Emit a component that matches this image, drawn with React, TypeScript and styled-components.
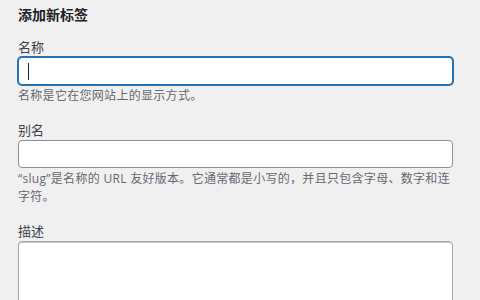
import React from "react";
import styled, { createGlobalStyle } from "styled-components";

const Global = createGlobalStyle`
  html, body {
    margin: 0;
    padding: 0;
    background: #f0f0f1;
    overflow: hidden;
  }
  body {
    font-family: "Open Sans", "Noto Sans CJK SC", sans-serif;
    color: #3c434a;
  }
`;

const Wrap = styled.div`
  width: 480px;
  height: 300px;
  box-sizing: border-box;
  padding: 5px 27px 0 18px;
  overflow: hidden;
`;

const Title = styled.h2`
  margin: 0 0 13px;
  font-size: 14px;
  line-height: 20px;
  font-weight: 700;
  color: #1d2327;
`;

const Field = styled.div`
  margin-bottom: 16px;
`;

const Label = styled.label`
  display: block;
  font-size: 13px;
  line-height: 18px;
  color: #3c434a;
  margin-bottom: 1px;
`;

const Input = styled.input<{ $focused?: boolean }>`
  display: block;
  box-sizing: border-box;
  width: 100%;
  height: 28px;
  margin: 0;
  padding: 0 8px;
  font-family: inherit;
  font-size: 14px;
  background: #fff;
  border: 1px solid ${(p) => (p.$focused ? "#2271b1" : "#8c8f94")};
  border-radius: 4px;
  box-shadow: ${(p) => (p.$focused ? "0 0 0 1px #2271b1" : "none")};
  outline: none;
  color: #2c3338;
`;

const Caret = styled.span`
  position: absolute;
  left: 10px;
  top: 6px;
  width: 1px;
  height: 17px;
  background: #1d2327;
`;

const InputBox = styled.div`
  position: relative;
`;

const Help = styled.p`
  margin: 2px 0 0;
  font-size: 12px;
  line-height: 18px;
  letter-spacing: 0.3px;
  color: #646970;
`;

const TextArea = styled.textarea`
  display: block;
  box-sizing: border-box;
  width: 100%;
  height: 80px;
  margin: 1px 0 0;
  padding: 4px 8px;
  font-family: inherit;
  font-size: 14px;
  background: #fff;
  border: 1px solid #a7aaad;
  border-radius: 4px;
  box-shadow: inset 0 1px 0 #c3c4c7;
  resize: none;
  outline: none;
`;

export default function App() {
  return (
    <>
      <Global />
      <Wrap>
        <Title>添加新标签</Title>
        <Field>
          <Label>名称</Label>
          <InputBox>
            <Input $focused readOnly />
            <Caret />
          </InputBox>
          <Help>名称是它在您网站上的显示方式。</Help>
        </Field>
        <Field>
          <Label>别名</Label>
          <Input readOnly />
          <Help>“slug”是名称的 URL 友好版本。它通常都是小写的，并且只包含字母、数字和连字符。</Help>
        </Field>
        <Field>
          <Label>描述</Label>
          <TextArea readOnly />
        </Field>
      </Wrap>
    </>
  );
}
